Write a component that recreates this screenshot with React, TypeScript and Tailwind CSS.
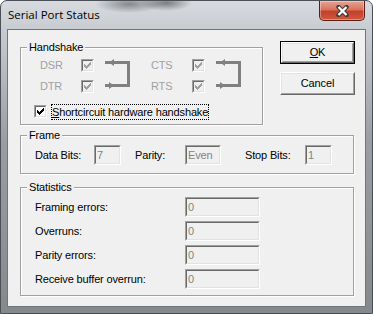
import type { ReactNode } from 'react';

// classic 7x7 check glyph, one run of pixels per entry: [x, y, width]
const CHECK = [
  [6, 0, 1], [5, 1, 2], [0, 2, 1], [4, 2, 3], [0, 3, 2],
  [3, 3, 3], [0, 4, 5], [1, 5, 3], [2, 6, 1]
];

const CheckBox = ({ disabled }: { disabled?: boolean }) => (
  <div className="w-[13px] h-[13px] shrink-0 border border-t-[#a0a0a0] border-l-[#a0a0a0] border-r-white border-b-white">
    <div
      className={`w-full h-full p-[1px] border border-t-[#696969] border-l-[#696969] border-r-[#e3e3e3] border-b-[#e3e3e3] ${
        disabled ? 'bg-[#f0f0f0]' : 'bg-white'
      }`}>
      <svg width="7" height="7" viewBox="0 0 7 7" className="block">
        {CHECK.map(([x, y, w]) => (
          <rect key={`${x}-${y}`} x={x} y={y} width={w} height={1} fill={disabled ? '#a0a0a0' : '#000'} />
        ))}
      </svg>
    </div>
  </div>
);

const Field = ({ value, className }: { value: string; className: string }) => (
  <div className={`h-[20px] shrink-0 border border-t-[#a0a0a0] border-l-[#a0a0a0] border-r-white border-b-white ${className}`}>
    <div className="h-full flex items-center pl-[1px] text-[#838383] border border-t-[#696969] border-l-[#696969] border-r-[#e3e3e3] border-b-[#e3e3e3]">
      {value}
    </div>
  </div>
);

const GroupBox = ({ title, className, children }: { title: string; className: string; children: ReactNode }) => (
  <div className={`relative shrink-0 border border-[#a0a0a0] shadow-[1px_1px_0_#fff,inset_1px_1px_0_#fff] ${className}`}>
    <span className="absolute left-[6px] -top-[7px] bg-[#f0f0f0] px-[2px] leading-[13px]">{title}</span>
    {children}
  </div>
);

const Bracket = ({ width }: { width: number }) => (
  <svg width={width} height="42" viewBox={`0 0 ${width} 42`} className="row-span-2 block self-start">
    <path d="M11 7.5H34.5V30.5H11" fill="none" stroke="#808080" strokeWidth="3" />
    <polygon points="15,7.5 20,4 20,11" fill="#808080" />
    <polygon points="20,30.5 15,27 15,34" fill="#808080" />
  </svg>
);

const Button = ({ children, isDefault }: { children: ReactNode; isDefault?: boolean }) => (
  <div className={`w-[75px] h-[23px] ${isDefault ? 'border border-black' : ''}`}>
    <div className="h-full border border-t-white border-l-white border-r-[#696969] border-b-[#696969]">
      <div className="h-full flex items-center justify-center border border-t-[#e3e3e3] border-l-[#e3e3e3] border-r-[#a0a0a0] border-b-[#a0a0a0]">
        {children}
      </div>
    </div>
  </div>
);

const stats = ['Framing errors:', 'Overruns:', 'Parity errors:', 'Receive buffer overrun:'];

const App = () => {
  return (
    <div className="w-[373px] h-[314px] flex flex-col overflow-hidden rounded-t-[7px] border border-[#4b5057] bg-[radial-gradient(34px_9px_at_128px_3px,rgba(70,70,70,0.55),transparent),radial-gradient(26px_8px_at_165px_2px,rgba(60,60,60,0.6),transparent),linear-gradient(to_bottom,#d7dbdf_0%,#c7cbd0_10%,#9a9ea2_45%,#86898c_100%)]">
      <div className="h-[28px] shrink-0 flex items-start justify-between pl-[7px] pr-[7px]">
        <span className="mt-[6px] leading-[16px] text-[11.5px] text-black font-['Open_Sans',sans-serif]">
          Serial Port Status
        </span>
        <div className="w-[46px] h-[20px] flex items-center justify-center rounded-b-[5px] border border-t-0 border-[#5e1d12] shadow-[inset_0_0_0_1px_rgba(255,255,255,0.35)] bg-[linear-gradient(to_bottom,#e8a493_0%,#d9735f_45%,#c3402b_55%,#d0593d_100%)]">
          <svg width="13" height="12" viewBox="0 0 13 12">
            <path d="M2.5 2L10.5 10M10.5 2L2.5 10" stroke="#3c3c3c" strokeWidth="4.4" strokeLinecap="round" />
            <path d="M2.5 2L10.5 10M10.5 2L2.5 10" stroke="#fff" strokeWidth="2.4" />
          </svg>
        </div>
      </div>

      <div className="flex-1 mx-[6px] mb-[6px] border border-[#6f757c] bg-[#f0f0f0] pt-[11px] pl-[12px] text-[11px] leading-[13px] tracking-[-0.15px] text-black font-['Liberation_Sans',Arial,sans-serif]">
        <div className="flex items-start">
          <GroupBox title="Handshake" className="mt-[6px] w-[243px] h-[78px] pt-[7px] pl-[13px]">
            <div className="ml-[6px] grid grid-cols-[41px_13px_57px_41px_13px_40px] grid-rows-[21px_21px] items-center text-[#a0a0a0]">
              <span>DSR</span>
              <CheckBox disabled />
              <Bracket width={57} />
              <span>CTS</span>
              <CheckBox disabled />
              <Bracket width={40} />
              <span>DTR</span>
              <CheckBox disabled />
              <span>RTS</span>
              <CheckBox disabled />
            </div>
            <div className="mt-[4px] h-[21px] flex items-center">
              <CheckBox />
              <span className="ml-[4px] leading-[14px] border border-dotted border-black">
                <u>S</u>hortcircuit hardware handshake
              </span>
            </div>
          </GroupBox>

          <div className="ml-[17px] flex flex-col gap-[8px]">
            <Button isDefault>
              <u>O</u>K
            </Button>
            <Button>Cancel</Button>
          </div>
        </div>

        <GroupBox title="Frame" className="mt-[10px] w-[334px] h-[39px] pt-[9px] pl-[14px]">
          <div className="h-[20px] flex items-center">
            <span className="w-[59px]">Data Bits:</span>
            <Field value="7" className="w-[27px]" />
            <span className="ml-[14px] w-[50px]">Parity:</span>
            <Field value="Even" className="w-[36px]" />
            <span className="ml-[24px] w-[60px]">Stop Bits:</span>
            <Field value="1" className="w-[27px]" />
          </div>
        </GroupBox>

        <GroupBox title="Statistics" className="mt-[13px] w-[334px] h-[109px] pt-[9px] pl-[14px]">
          <div className="flex flex-col gap-[4px]">
            {stats.map((label) => (
              <div key={label} className="h-[20px] flex items-center">
                <span className="w-[150px]">{label}</span>
                <Field value="0" className="w-[75px]" />
              </div>
            ))}
          </div>
        </GroupBox>
      </div>
    </div>
  );
};

export default App;
